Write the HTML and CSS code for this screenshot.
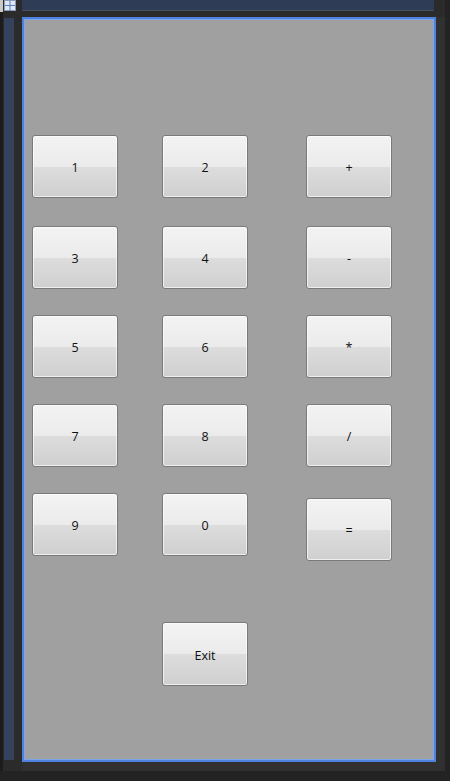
FILE: index.html
```html
<!DOCTYPE html>
<html lang="en">
<head>
    <meta charset="UTF-8">
    <meta name="viewport" content="width=device-width, initial-scale=1.0">
    <title>Calculator - Design</title>
    <link rel="stylesheet" href="styles.css">
</head>
<body>
    <div class="shell">
        <div class="rail">
            <svg class="grip" width="16" height="12" viewBox="0 0 16 12">
                <rect x="0" y="0" width="3" height="12" fill="#c9c9c9"/>
                <rect x="4.5" y="0.5" width="11" height="10" fill="#dfe7f3" stroke="#8a9bb8" stroke-width="1"/>
                <line x1="10" y1="1" x2="10" y2="11" stroke="#5b7fb8"/>
                <line x1="5" y1="5.5" x2="15" y2="5.5" stroke="#5b7fb8"/>
            </svg>
            <div class="toolbox"></div>
        </div>
        <div class="top">
            <div class="tab"></div>
        </div>
        <div class="side"></div>

        <div class="window">
            <div class="keys">
                <button class="key">1</button>
                <button class="key">2</button>
                <button class="key op">+</button>

                <button class="key">3</button>
                <button class="key">4</button>
                <button class="key op">-</button>

                <button class="key">5</button>
                <button class="key">6</button>
                <button class="key op">*</button>

                <button class="key">7</button>
                <button class="key">8</button>
                <button class="key op">/</button>

                <button class="key">9</button>
                <button class="key">0</button>
                <button class="key op equals">=</button>

                <button class="key exit">Exit</button>
            </div>
        </div>
        <div class="bottom"></div>
    </div>
</body>
</html>
```

FILE: styles.css
```css
*{
    margin:0;
    padding:0;
    box-sizing: border-box;
}
body{
    width: 450px;
    height: 781px;
    background-color: #232323;
    overflow: hidden;
}
.shell{
    display: grid;
    grid-template-columns: 22px 414px 9px 5px;
    grid-template-rows: 17px 745px 9px 10px;
    height: 100%;
}

/* left toolbox strip */
.rail{
    grid-column: 1;
    grid-row: 1 / 4;
    background-color: #2b2b2b;
    display: flex;
    flex-direction: column;
    border-left: 3px solid #1c1c1c;
}
.grip{
    display: block;
    margin-left: -3px;
}
.toolbox{
    width: 10px;
    height: 742px;
    margin-top: 6px;
    margin-left: 1px;
    background-color: #34425d;
}

/* designer tab strip */
.top{
    grid-column: 2 / 4;
    grid-row: 1;
    background-color: #2b2b2b;
}
.tab{
    width: 412px;
    height: 11px;
    background-color: #2f3c56;
    border-bottom: 1px solid #44506a;
}
.side{
    grid-column: 3;
    grid-row: 2 / 4;
    background-color: #303030;
}
.bottom{
    grid-column: 2;
    grid-row: 3;
    background-color: #303030;
}

/* the form being designed */
.window{
    grid-column: 2;
    grid-row: 2;
    background-color: #a0a0a0;
    border: 2px solid #4f82e0;
    box-shadow: inset 0 0 0 1px #7ea6ec;
}
.keys{
    display: grid;
    grid-template-columns: 86px 86px 86px;
    grid-template-rows: 91px 89px 89px 89px 129px 65px;
    column-gap: 44px;
    padding: 116px 0 0 8px;
}
.key{
    width: 86px;
    height: 63px;
    border: 1px solid #7a7a7a;
    border-radius: 3px;
    background: linear-gradient(#f3f3f3 0%, #ebebeb 50%, #dddddd 50%, #cfcfcf 100%);
    box-shadow: inset 0 0 0 1px rgba(255,255,255,0.65);
    font-family: "Segoe UI", "Open Sans", sans-serif;
    font-size: 12.5px;
    color: #111;
    padding-top: 2px;
    align-self: start;
}
.op{
    margin-left: 14px;
}
.equals{
    margin-top: 5px;
}
.exit{
    grid-column: 2;
    grid-row: 6;
    height: 64px;
}
```
